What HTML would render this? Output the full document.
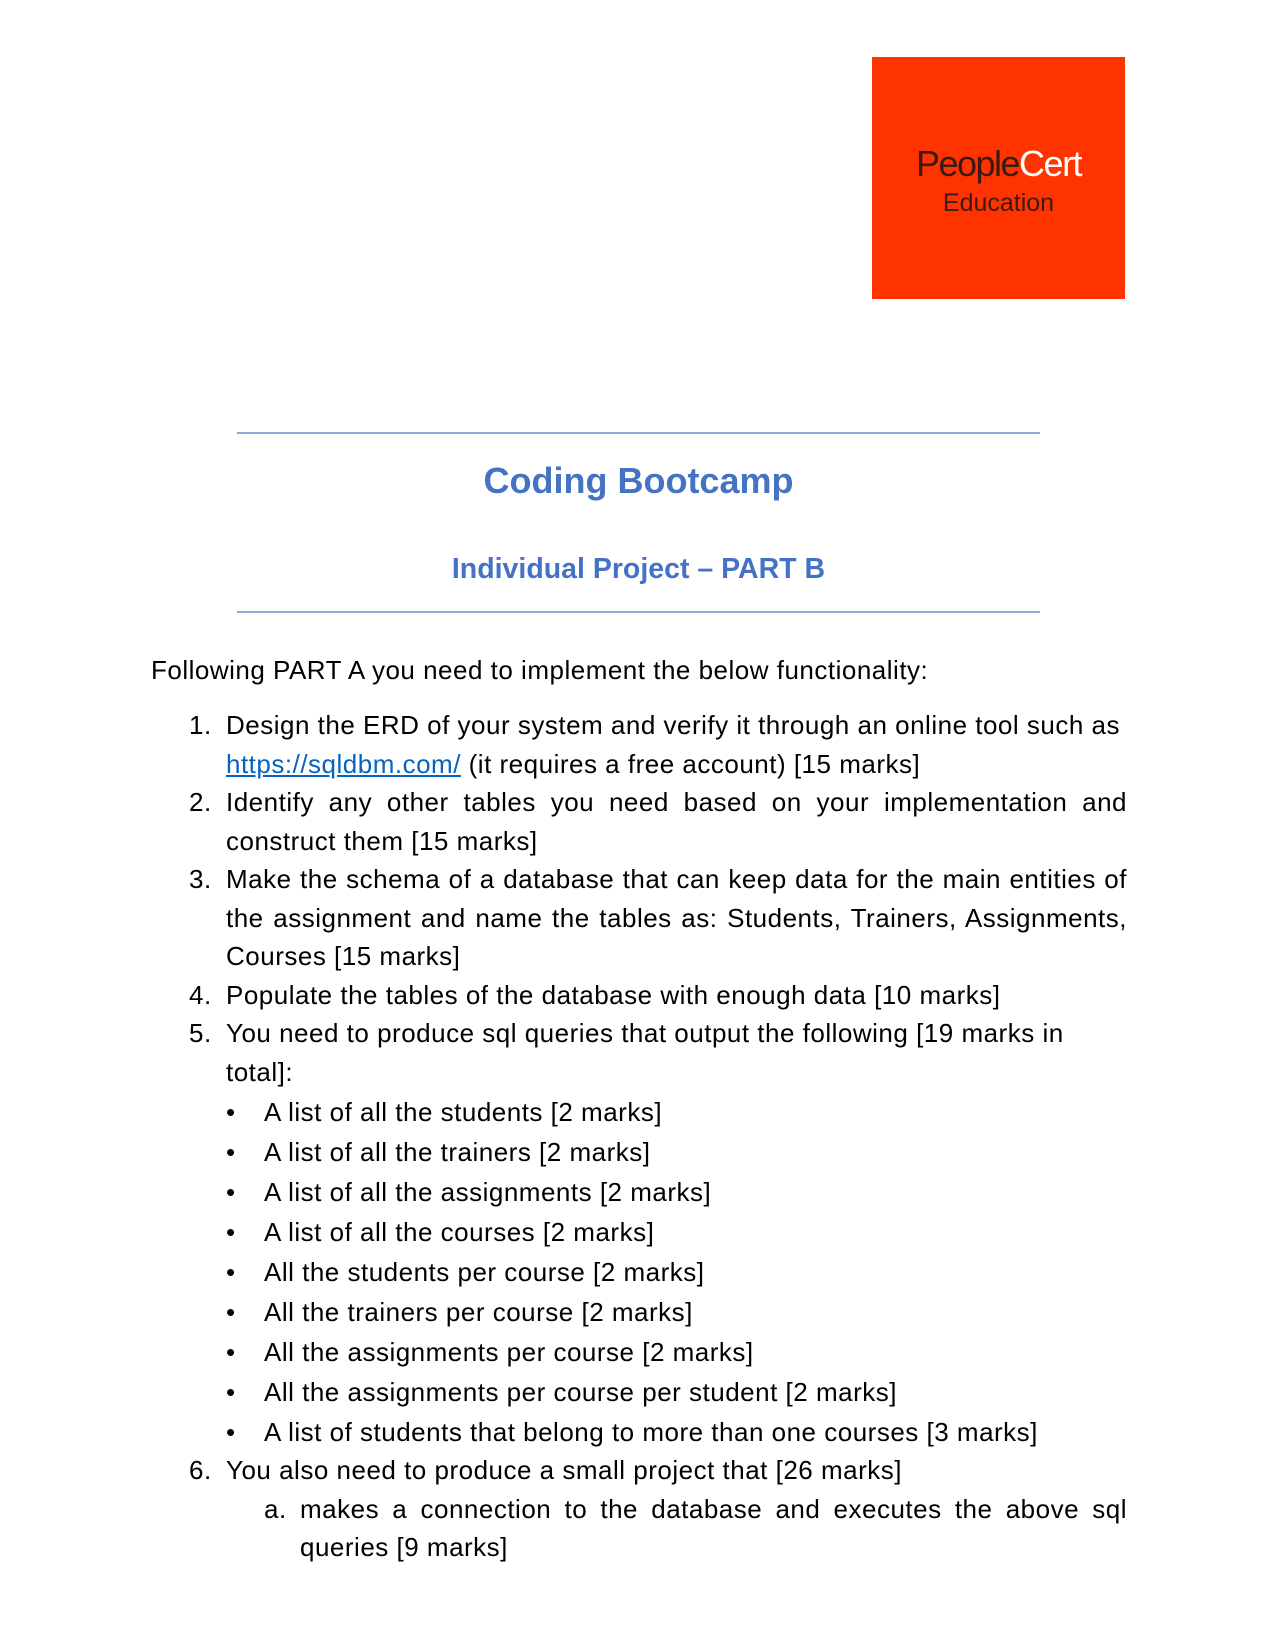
<!DOCTYPE html>
<html><head><meta charset="utf-8"><style>
html,body{margin:0;padding:0;background:#fff}
body{width:1275px;height:1650px;position:relative;overflow:hidden;font-family:"Liberation Sans",sans-serif;color:#000}
.l{position:absolute;font-size:26px;letter-spacing:0.5px;line-height:38px;white-space:nowrap}
.j{white-space:normal;text-align:justify;text-align-last:justify}
.hr{position:absolute;left:237px;width:803px;height:2px;background:#8eaadb}
.h{position:absolute;left:237px;width:803px;text-align:center;color:#4472c4;font-weight:bold;white-space:nowrap}
a{color:#0563c1;text-decoration:underline}
.logo{position:absolute;left:872px;top:57px;width:253px;height:242px;background:#ff3300}
</style></head><body>
<div class="logo">
<div style="position:absolute;left:0;width:253px;top:86px;text-align:center;font-size:36px;letter-spacing:-1.5px;color:#3a1a12">People<span style="color:#fff">Cert</span></div>
<div style="position:absolute;left:0;width:253px;top:132px;text-align:center;font-size:25px;color:#3a1a12">Education</div>
</div>
<div class="hr" style="top:432px"></div>
<div class="h" style="top:460px;font-size:36px">Coding Bootcamp</div>
<div class="h" style="top:553px;font-size:28.5px">Individual Project – PART B</div>
<div class="hr" style="top:611px"></div>

<div class="l" style="left:151px;top:651px">Following PART A you need to implement the below functionality:</div>

<div class="l" style="left:189px;top:706px">1.</div>
<div class="l" style="left:226px;top:706px">Design the ERD of your system and verify it through an online tool such as</div>
<div class="l" style="left:226px;top:745px"><a>https://sqldbm.com/</a> (it requires a free account) [15 marks]</div>
<div class="l" style="left:189px;top:783px">2.</div>
<div class="l j" style="left:226px;top:783px;width:901px">Identify any other tables you need based on your implementation and</div>
<div class="l" style="left:226px;top:822px">construct them [15 marks]</div>
<div class="l" style="left:189px;top:860px">3.</div>
<div class="l j" style="left:226px;top:860px;width:901px">Make the schema of a database that can keep data for the main entities of</div>
<div class="l j" style="left:226px;top:899px;width:901px">the assignment and name the tables as: Students, Trainers, Assignments,</div>
<div class="l" style="left:226px;top:937px">Courses [15 marks]</div>
<div class="l" style="left:189px;top:976px">4.</div>
<div class="l" style="left:226px;top:976px">Populate the tables of the database with enough data [10 marks]</div>
<div class="l" style="left:189px;top:1014px">5.</div>
<div class="l" style="left:226px;top:1014px">You need to produce sql queries that output the following [19 marks in</div>
<div class="l" style="left:226px;top:1053px">total]:</div>

<div class="l" style="left:226px;top:1093px">•</div><div class="l" style="left:264px;top:1093px">A list of all the students [2 marks]</div>
<div class="l" style="left:226px;top:1133px">•</div><div class="l" style="left:264px;top:1133px">A list of all the trainers [2 marks]</div>
<div class="l" style="left:226px;top:1173px">•</div><div class="l" style="left:264px;top:1173px">A list of all the assignments [2 marks]</div>
<div class="l" style="left:226px;top:1213px">•</div><div class="l" style="left:264px;top:1213px">A list of all the courses [2 marks]</div>
<div class="l" style="left:226px;top:1253px">•</div><div class="l" style="left:264px;top:1253px">All the students per course [2 marks]</div>
<div class="l" style="left:226px;top:1293px">•</div><div class="l" style="left:264px;top:1293px">All the trainers per course [2 marks]</div>
<div class="l" style="left:226px;top:1333px">•</div><div class="l" style="left:264px;top:1333px">All the assignments per course [2 marks]</div>
<div class="l" style="left:226px;top:1373px">•</div><div class="l" style="left:264px;top:1373px">All the assignments per course per student [2 marks]</div>
<div class="l" style="left:226px;top:1413px">•</div><div class="l" style="left:264px;top:1413px">A list of students that belong to more than one courses [3 marks]</div>

<div class="l" style="left:189px;top:1451px">6.</div>
<div class="l" style="left:226px;top:1451px">You also need to produce a small project that [26 marks]</div>
<div class="l" style="left:264px;top:1490px">a.</div>
<div class="l j" style="left:300px;top:1490px;width:827px">makes a connection to the database and executes the above sql</div>
<div class="l" style="left:300px;top:1528px">queries [9 marks]</div>
</body></html>
